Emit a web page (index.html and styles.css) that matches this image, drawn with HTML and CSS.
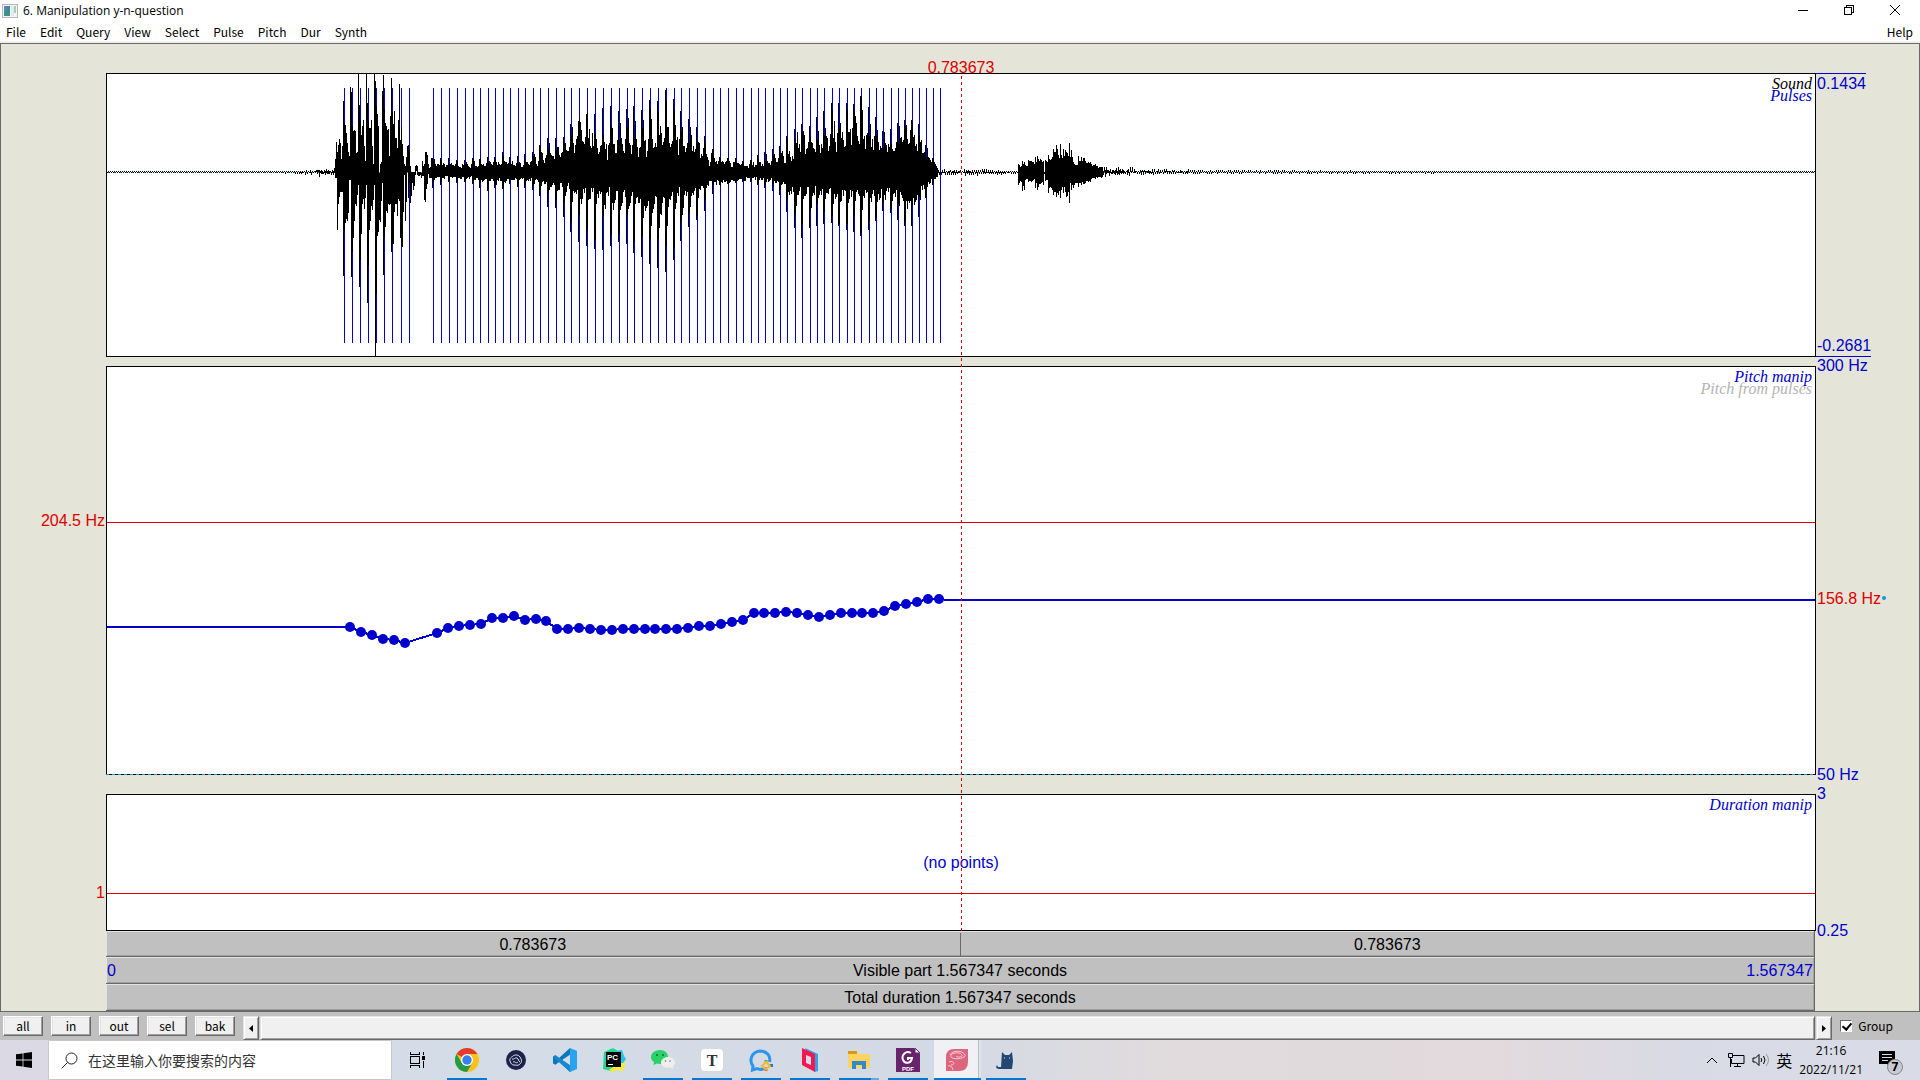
FILE: index.html
```html
<!DOCTYPE html>
<html lang="en">
<head>
<meta charset="utf-8">
<title>6. Manipulation y-n-question</title>
<link rel="stylesheet" href="styles.css">
</head>
<body>
<div class="window">
  <header class="titlebar">
    <svg class="app-icon" viewBox="0 0 16 14"><rect x=".5" y=".5" width="15" height="13" fill="#f4f4f4" stroke="#b5b8bb"/><rect x="2" y="2" width="6" height="10" fill="#3c8f8a"/><rect x="2" y="2" width="3" height="5" fill="#5b83b5"/><rect x="9" y="2" width="3" height="10" fill="#e4e9ee"/><rect x="12" y="2" width="2" height="7" fill="#a9cdbb"/></svg>
    <h1 class="title">6. Manipulation y-n-question</h1>
    <button class="win-btn" aria-label="Minimize"><svg viewBox="0 0 12 12"><path d="M1 6.5h10"/></svg></button>
    <button class="win-btn" aria-label="Restore"><svg viewBox="0 0 12 12"><path d="M1.5 3.5h7v7h-7zM3.5 3V1.5h7v7H9"/></svg></button>
    <button class="win-btn" aria-label="Close"><svg viewBox="0 0 12 12"><path class="smooth" d="M1 1l10 10M11 1L1 11"/></svg></button>
  </header>
  <nav class="menubar">
    <button>File</button><button>Edit</button><button>Query</button><button>View</button><button>Select</button><button>Pulse</button><button>Pitch</button><button>Dur</button><button>Synth</button><button class="help">Help</button>
  </nav>

  <main class="editor">
    <div class="cursor-time red">0.783673</div>

    <section class="plot sound">
      <svg class="chart" viewBox="0 0 1708 282" preserveAspectRatio="none">
        <path id="pulses" class="pulse-lines"/>
        <path class="zero-dash" d="M0 98.5H1708"/>
        <path id="wave" class="wave"/>
      </svg>
      <div class="legend"><span>Sound</span><span class="blue">Pulses</span></div>
    </section>
    <div class="axis sound-axis blue"><span class="max">0.1434</span><span class="min">-0.2681</span></div>

    <div class="left pitch-left red"><span>204.5 Hz</span></div>
    <section class="plot pitch">
      <svg class="chart" viewBox="0 0 1708 407" preserveAspectRatio="none">
        <path class="red-line" d="M0 155.5H1708"/>
        <path id="contour" class="contour"/>
        <g id="points" class="points"></g>
      </svg>
      <div class="legend"><span class="blue">Pitch manip</span><span class="faint">Pitch from pulses</span></div>
    </section>
    <div class="axis pitch-axis blue"><span class="top">300 Hz</span><span class="value red">156.8 Hz<i></i></span><span class="bottom">50 Hz</span></div>

    <div class="left duration-left red"><span>1</span></div>
    <section class="plot duration">
      <svg class="chart" viewBox="0 0 1708 135" preserveAspectRatio="none"><path class="red-line" d="M0 98.5H1708"/></svg>
      <p class="empty blue">(no points)</p>
      <div class="legend"><span class="blue">Duration manip</span></div>
    </section>
    <div class="axis duration-axis blue"><span class="top">3</span><span class="bottom">0.25</span></div>

    <div class="bar halves"><button>0.783673</button><button>0.783673</button></div>
    <button class="bar visible"><span class="blue">0</span><span>Visible part 1.567347 seconds</span><span class="blue">1.567347</span></button>
    <button class="bar total">Total duration 1.567347 seconds</button>
    <div class="cursor"></div>
  </main>

  <div class="controls">
    <button>all</button><button>in</button><button>out</button><button>sel</button><button>bak</button>
    <div class="scroll"><button class="arrow" aria-label="Scroll left"><svg viewBox="0 0 4 7"><path d="M4 0v7L0 3.5z"/></svg></button><button class="thumb" aria-label="Scroll position"></button><button class="arrow" aria-label="Scroll right"><svg viewBox="0 0 4 7"><path d="M0 0v7l4-3.5z"/></svg></button></div>
    <input type="checkbox" id="group" checked><label for="group">Group</label>
  </div>

  <footer class="taskbar">
    <button class="start" aria-label="Start"><svg viewBox="0 0 16 16"><path d="M0 2.3l6.6-.9v6.1H0zM7.4 1.3L16 0v7.5H7.4zM0 8.4h6.6v6.2L0 13.7zM7.4 8.4H16V16l-8.6-1.2z"/></svg></button>
    <label class="search"><svg viewBox="0 0 17 17"><circle cx="10.5" cy="6.5" r="5.5"/><path d="M6.6 10.4L.6 16.4"/></svg><input type="text" aria-label="Search" placeholder="在这里输入你要搜索的内容"></label>
    <nav class="tasks">
      <button aria-label="Task view"><svg class="taskview" viewBox="0 0 18 16"><path d="M1.5 0v2.500h9V0M1.500 16v-2.500h9V16M1.500 4.500h9v7h-9zM14.500 0v3M14.500 9v7"/><rect x="13" y="4" width="3" height="4"/></svg></button>
      <button class="open" aria-label="Chrome"><svg viewBox="0 0 24 24"><circle cx="12" cy="12" r="12" fill="#fbc116"/><path d="M12 12L1.600 6A12 12 0 0 1 22.400 6H12z" fill="#e33b2e"/><path d="M1.600 6A12 12 0 0 0 12 24l5.200-9L12 12l-5.200 3z" fill="#259a48"/><circle cx="12" cy="12" r="6" fill="#fff"/><circle cx="12" cy="12" r="4.700" fill="#3b7ded"/></svg></button>
      <button aria-label="Browser"><svg viewBox="0 0 24 24"><circle cx="12" cy="12" r="10" fill="#1c2348"/><path d="M6 13c-1-3 2-4 3-5s5-2 7 1 2 5 0 7-4 1-6 1-3-1-4-4zM8 11c2 1 3-2 5-1s1 3 3 4M9 14c2-1 3 2 5 0" fill="none" stroke="#d9deef"/></svg></button>
      <button aria-label="Visual Studio Code"><svg viewBox="0 0 24 24"><path d="M17 0L6 10 2.500 7.200 0 8.600v6.800l2.500 1.400L6 14l11 10 1-6-9-6 9-6z" fill="#0878bd"/><path d="M2.500 7.200L0 8.600 17.500 24l.5-6z" fill="#1689ce"/><path d="M17 0l7 3v18l-7 3z" fill="#27a4ed"/></svg></button>
      <button aria-label="PyCharm"><svg viewBox="0 0 24 24"><path d="M2 4l9-4 5 3 2 12-9 8-8-2z" fill="#22d88f"/><path d="M14 3l6-1 2 6 2 3-5 7z" fill="#1ec8e8"/><path d="M7 22l10-7 7 0-3 8-6-1-5 2z" fill="#f6ec37"/><rect x="4" y="4" width="15" height="15" fill="#000"/><text x="5" y="12" class="pc">PC</text><path d="M6 16.500h5" stroke="#fff"/></svg></button>
      <button class="open" aria-label="WeChat"><svg viewBox="0 0 24 24"><path d="M9 2c5 0 8 3 8 7s-3 7-8 7l-3-.5L2.500 17l.5-3C1 13 0 11 0 9c0-4 4-7 9-7z" fill="#29d167"/><path d="M17 9c4 0 7 2.500 7 5.500 0 2-1 3-2 4l.5 2.500-3-1.500c-6 1.500-9.500-2-9.500-5S13 9 17 9z" fill="#eeeeec"/><g fill="#176d3b"><circle cx="6" cy="7" r="1"/><circle cx="12" cy="7" r="1"/></g><circle cx="14.500" cy="13" r=".8" fill="#777"/><circle cx="19" cy="13" r=".8" fill="#777"/></svg></button>
      <button class="open" aria-label="Typora"><svg viewBox="0 0 24 24"><rect x="1" y="1" width="22" height="22" rx="4" fill="#fff"/><text x="12" y="18" text-anchor="middle" class="typora">T</text></svg></button>
      <button class="open" aria-label="WeCom"><svg viewBox="0 0 24 24"><path d="M15 20.500c-2 1-5 1-7 0L3.500 22l.5-4C0 13 2 4 11 3c7 0 11 5 9.500 11" fill="none" stroke="#2b96ea" stroke-width="3"/><path d="M17 15v-3" stroke="#32b85b" stroke-width="3"/><path d="M20 17.500h4" stroke="#1877d2" stroke-width="3"/><path d="M17 19v4" stroke="#f2622e" stroke-width="3"/><path d="M17 14l-4 4 4 3 4-3z" fill="none" stroke="#fdb52d" stroke-width="2"/></svg></button>
      <button class="open" aria-label="Parallels"><svg viewBox="0 0 24 24"><path d="M7 0l13 6v17l-3 1z" fill="#29a8e4"/><path d="M4 0l13 6v18L4 17z" fill="#f5174f"/><path d="M8 7l5 2v8l-5-2z" fill="#d9dce6"/></svg></button>
      <button class="open stacked" aria-label="Explorer"><svg viewBox="0 0 24 24"><path d="M1 4h9l2 2h11v14H1z" fill="#fdd362"/><path d="M1 3h9v3H1z" fill="#d69a12"/><path d="M5 13h14v8h-4v-4H9v4H5z" fill="#3288c9"/></svg></button>
      <button class="open" aria-label="PDF editor"><svg viewBox="0 0 24 24"><path d="M0 0h18l6 6v18H0z" fill="#67246b"/><path d="M19 0v5h5z" fill="#fff" stroke="#67246b"/><path d="M15 5C10 2 5 7 7 12c2 4 8 4 9-2h-4v2" fill="none" stroke="#fff" stroke-width="2"/><text x="12" y="23" text-anchor="middle" class="pdf">PDF</text></svg></button>
      <button class="open active" aria-label="Praat"><svg viewBox="0 0 24 24"><path d="M9 1h14v13q0 9-9 9H1V9q0-8 8-8z" fill="#dd667f"/><path d="M5 7c2-5 13-5 15 0 1 4-12 5-14 2s6-6 10-3-4 4-5 2M4 14c5-2 7 3 2 3M3 18c3-1 4 1 5 4" fill="none" stroke="#f5c9d0"/></svg></button>
      <button class="open" aria-label="Clash"><svg viewBox="0 0 24 24"><path d="M8 4l3 3h4l3-3 1 9-1 8H6c-3 0-5-1-3-4l1 2h3z" fill="#224773"/><path d="M10 10h1M15 10h1" stroke="#d8deea"/></svg></button>
    </nav>
    <div class="tray">
      <svg class="chevron" viewBox="0 0 12 7"><path d="M1 6l5-5 5 5"/></svg>
      <svg class="net" viewBox="0 0 17 14"><path d="M5 2.500h11v8H3.500V6M9.500 11v2.500M6 13.500h7M.5.500h4v4h-4zM2.500 5v9"/></svg>
      <svg class="vol" viewBox="0 0 17 14"><path d="M1 5h2.500L7 1.500v11L3.500 9H1zM9 5q1.500 2 0 4M11.500 3q3 4 0 8"/><path d="M14 1q5 6 0 12" stroke="#999"/></svg>
      <span class="ime">英</span>
      <time class="clock"><span>21:16</span><span>2022/11/21</span></time>
      <button class="notice" aria-label="Notifications"><svg viewBox="0 0 25 25"><path d="M0 1h16v13h-4v4l-4-4H0z"/><path d="M3 4.500h10M3 7.500h10M3 10.500h6" stroke="#d9dbe6"/><circle cx="16" cy="17" r="7.500" fill="#c9cbd2" stroke="#888"/><text x="16" y="21" text-anchor="middle">7</text></svg></button>
    </div>
  </footer>
</div>
<script src="plot.js"></script>
</body>
</html>
```

FILE: styles.css
```css
* { box-sizing: border-box; }
body { margin: 0; font: 12px/16px "Noto Sans CJK SC", "Open Sans", sans-serif; color: #000; }
button { margin: 0; padding: 0; border: 0; background: none; font: inherit; color: inherit; }
svg { display: block; }
.window { display: flex; flex-direction: column; height: 100vh; background: #fff; overflow: hidden; }
.blue { color: #0000cd; }
.red { color: #dc0000; }
.faint { color: #b4b4b4; }

.titlebar { display: flex; align-items: center; height: 22px; padding: 0 2px; flex: none; }
.app-icon { width: 16px; height: 14px; }
.title { margin: 0 auto 0 5px; font: 12px/16px "Open Sans", sans-serif; }
.win-btn { width: 46px; height: 20px; display: grid; place-items: center; align-self: start; }
.win-btn svg { width: 12px; height: 12px; fill: none; stroke: #000; shape-rendering: crispEdges; }
.win-btn .smooth { shape-rendering: auto; }
.menubar { display: flex; align-items: center; gap: 14px; height: 21px; padding: 0 7px 0 6px; border-bottom: 2px solid #f0f0f0; flex: none; }
.menubar .help { margin-left: auto; }

.editor {
  position: relative; flex: 1; display: grid; min-height: 0;
  grid-template-columns: 105px 1fr 103px;
  grid-template-rows: 29px 284fr 9px 409fr 19px 137fr 26px 27px 27px;
  background: #e4e5d8; border: 1px solid #696969;
  font: 16px/18px "Liberation Sans", Arial, sans-serif;
}
.cursor-time { grid-area: 1 / 2; text-align: center; padding-top: 15px; }
.plot { position: relative; border: 1px solid #000; background: #fff; grid-column: 2; min-height: 0; }
.chart { position: absolute; inset: 0; width: 100%; height: 100%; fill: none; }
.chart path { vector-effect: non-scaling-stroke; shape-rendering: crispEdges; }
.sound { grid-row: 2; }
.pitch { grid-row: 4; }
.pitch::after { content: ""; position: absolute; left: -1px; right: 0; bottom: -1px; height: 1px; background: repeating-linear-gradient(90deg, #00a0dc 0 3px, transparent 3px 6px); }
.duration { grid-row: 6; display: grid; place-items: center; }
.pulse-lines { stroke: #0000cd; }
.wave { stroke: #000; }
.zero-dash { stroke: #00a0dc; stroke-dasharray: 3 3; }
.red-line { stroke: #dc0000; }
.contour { stroke: #0000cd; stroke-width: 2; }
.points { fill: #0000cd; }
.legend { position: absolute; top: 4px; right: 3px; display: flex; flex-direction: column; align-items: flex-end; font: italic 16px/12px "Liberation Serif", "Times New Roman", serif; }
.empty { position: relative; margin: 0; }

.left { grid-column: 1; position: relative; }
.pitch-left { grid-row: 4; }
.duration-left { grid-row: 6; }
.left span { position: absolute; right: 1px; top: 38%; transform: translateY(-50%); white-space: nowrap; }
.duration-left span { top: 72%; }
.axis { grid-column: 3; position: relative; white-space: nowrap; }
.axis span { position: absolute; left: 1px; transform: translateY(-50%); }
.sound-axis { grid-row: 2; display: flex; flex-direction: column; justify-content: space-between; align-items: flex-start; }
.sound-axis .max, .sound-axis .min { position: static; transform: none; padding: 1px 0 0 1px; border-top: 1px solid #0000cd; }
.sound-axis .min { padding: 0 0 1px 1px; border-top: 0; border-bottom: 1px solid #0000cd; }
.pitch-axis { grid-row: 4; }
.duration-axis { grid-row: 6; }
.top { top: 0; }
.bottom { top: 100%; }
.value { top: 57%; }
.value i { display: inline-block; width: 4px; height: 4px; margin: 0 0 4px 1px; border-radius: 2px; background: #00a0dc; }
.cursor { position: absolute; top: 32px; bottom: 80px; left: 105px; right: 103px; pointer-events: none; }
.cursor::after { content: ""; position: absolute; left: 50%; top: 0; bottom: 0; width: 1px; background: repeating-linear-gradient(#dc0000 0 3px, transparent 3px 6px); }

.bar { grid-column: 2; background: #c0c0c0; border: 1px solid #696969; border-width: 0 1px 1px 0; margin: 0 1px 0 0; padding-top: 2px; box-shadow: inset 1px 1px #e3e3e3, inset -1px -1px #a0a0a0; }
.halves { grid-row: 7; display: flex; }
.halves button { flex: 1; }
.halves button + button { border-left: 1px solid #696969; }
.visible { grid-row: 8; display: grid; grid-template-columns: 1fr auto 1fr; align-items: center; padding: 2px 1px 0; }
.visible span:first-child { text-align: left; }
.visible span:last-child { text-align: right; }
.total { grid-row: 9; }

.controls { display: flex; align-items: center; gap: 8px; height: 28px; padding: 0 27px 0 3px; background: #c0c0c0; flex: none; }
.controls > button { width: 40px; height: 20px; background: #f0f0f0; border: 1px solid; border-color: #fff #696969 #696969 #fff; box-shadow: inset -1px -1px #a0a0a0, inset 1px 1px #e3e3e3; }
.scroll { display: flex; flex: 1; gap: 1px; height: 24px; align-self: end; }
.scroll button { background: #f0f0f0; border: 1px solid; border-color: #e3e3e3 #696969 #696969 #e3e3e3; box-shadow: inset 1px 1px #fff, inset -1px -1px #a0a0a0; }
.arrow { width: 16px; display: grid; place-items: center; }
.arrow svg { width: 4px; height: 7px; }
.thumb { flex: 1; }
.controls input { appearance: none; width: 12px; height: 12px; margin: 0; background: #fff; border: 1px solid; border-color: #696969 #fff #fff #696969; position: relative; }
.controls input:checked::after { content: ""; position: absolute; left: 3px; top: 0; width: 4px; height: 7px; border: solid #000; border-width: 0 2px 2px 0; transform: rotate(40deg); }
.controls label { margin-left: -2px; }

.taskbar { display: flex; height: 40px; flex: none; background: linear-gradient(90deg, #dbd9e3, #d3dce7 22%, #d4dae5 50%, #e0dbdd 60%, #e2dadd 78%, #d8dae5 88%, #d9dbe6); }
.start { width: 48px; display: grid; place-items: center; }
.start svg { width: 16px; height: 16px; }
.search { display: flex; align-items: center; gap: 10px; width: 344px; padding-left: 12px; background: #fff; border: 1px solid #c8c8cc; }
.search svg { width: 17px; height: 17px; fill: none; stroke: #222; }
.search input { flex: 1; min-width: 0; border: 0; padding: 0; outline: 0; background: none; font: 14px/20px "Noto Sans CJK SC", sans-serif; }
.search input::placeholder { color: #333; opacity: 1; }
.tasks { display: flex; gap: 1px; margin-left: 2px; }
.tasks button { position: relative; width: 48px; display: grid; place-items: center; }
.tasks svg { width: 24px; height: 24px; }
.tasks .taskview { width: 18px; height: 16px; fill: none; stroke: #000; shape-rendering: crispEdges; }
.taskview rect { fill: #000; stroke: none; }
.tasks .open::after { content: ""; position: absolute; left: 4px; right: 4px; bottom: 0; height: 2px; background: #0078d7; }
.tasks .stacked::after { border-right: 8px solid #62a8e5; }
.tasks .active { background: linear-gradient(90deg, transparent 1px, #f0f1f5 1px 45px, #b9bdc7 45px 46px, #e1e4ec 46px); }
.tasks .active::after { left: 1px; right: 0; }
.pc { font: bold 8px "Liberation Sans", sans-serif; fill: #fff; }
.typora { font: bold 16px "Liberation Serif", serif; fill: #333; }
.pdf { font: bold 6px "Liberation Sans", sans-serif; fill: #fff; }
.tray { display: flex; align-items: center; margin-left: auto; gap: 7px; padding-right: 16px; }
.tray svg { fill: none; stroke: #000; }
.chevron { width: 12px; height: 7px; margin-right: 3px; }
.net, .vol { width: 17px; height: 14px; }
.ime { font-size: 16px; line-height: 20px; }
.clock { display: flex; flex-direction: column; align-items: center; font: 12px/19px "Open Sans", sans-serif; }
.notice { margin-left: 9px; }
.tray .notice svg { width: 25px; height: 25px; fill: #000; stroke: none; margin-top: 4px; }
.notice text { font: bold 12px "Open Sans", sans-serif; }
```

FILE: plot.js
```js
// Draws the waveform, the glottal pulses and the pitch contour.
const MID = 98.5;

// Small repeatable noise source, so every load draws the same curve.
let seed = 7;
const noise = () => (seed = (seed * 1103515245 + 12345) % 2147483648) / 2147483648;

// Column: x, height above the zero line, depth below it.
const columns = [];
const add = (x, up, down) => columns.push([x, up, down]);

// Interpolated noisy stretch through [x, up, down] keys.
// Neighbouring columns swing to opposite sides of the zero line.
function stretch(keys) {
  for (let i = 0; i < keys.length - 1; i++) {
    const [x0, u0, d0] = keys[i], [x1, u1, d1] = keys[i + 1];
    for (let x = x0; x < x1; x++) {
      const t = (x - x0) / (x1 - x0), a = 0.9 * noise(), b = 0.9 * noise();
      const u = (u0 + (u1 - u0) * t) * a, d = (d0 + (d1 - d0) * t) * b;
      if (x % 2) add(x, u + 0.6, Math.min(d, d / 2) - 1);
      else add(x, u / 2 - 0.4, d);
    }
  }
}

stretch([[0, 0, 0], [150, 0, 0], [190, 1, 1], [200, 2, 3], [207, 3, 4], [213, 7, 6], [216, 2, 3], [221, 5, 4], [224, 2, 3], [228, 5, 4]]);

// First vowel, one entry per column.
const onset = [
  [13, 5], [30, 5], [20, 57], [27, 31], [33, 24], [29, 19], [13, 19], [26, 19], [71, 103], [49, 58], [47, 50], [39, 46],
  [29, 48], [20, 40], [16, 7], [85, 7], [80, 104], [46, 79], [41, 65], [42, 48], [41, 31], [19, 33], [20, 22], [98, 12],
  [67, 114], [51, 87], [37, 61], [46, 31], [52, 26], [26, 36], [11, 25], [98, 12], [69, 130], [51, 93], [44, 57], [44, 48],
  [52, 33], [26, 37], [8, 27], [98, 12], [91, 184], [66, 121], [58, 63], [46, 59], [-1, 47], [8, 49], [10, 28], [81, 10],
  [97, 102], [63, 64], [49, 54], [46, 38], [42, 40], [43, 31], [16, 32], [56, 31], [94, 79], [60, 71], [48, 71], [61, 39],
  [34, 31], [34, 31], [24, 43], [52, 26], [88, 28], [32, 65], [45, 73], [28, 74], [16, 39], [8, 2], [6, 48], [15, 29],
  [26, -1], [27, 25], [23, 10], [6, 30], [0, 23], [0, 10], [0, 17], [0, 13], [6, 2], [7, -2], [6, 2], [0, 3], [0, 3],
  [0, 2], [-1, 5], [11, 3], [6, 3], [8, 27], [20, 29], [20, 16], [17, 11], [8, 1], [4, 5], [5, 5], [14, 5]
];
onset.forEach(([u, d], i) => add(228 + i, u, d));

// Voiced part: pulse x, peak up, peak down, body up, body down.
const voiced = [
  [326, 14, 15, 6, 4], [334, 14, 12, 6, 4], [342, 14, 9, 5, 4], [350, 12, 10, 5, 5], [358, 12, 9, 5, 5], [366, 14, 11, 5, 6],
  [373, 13, 15, 7, 7], [381, 15, 18, 8, 7], [388, 15, 15, 7, 8], [396, 20, 16, 6, 7], [403, 15, 11, 6, 6], [411, 16, 14, 5, 6],
  [418, 18, 15, 7, 7], [426, 20, 17, 8, 8], [433, 27, 23, 12, 10], [441, 34, 34, 14, 14], [449, 34, 35, 15, 13],
  [457, 35, 44, 17, 14], [464, 48, 59, 22, 18], [472, 51, 69, 26, 18], [480, 58, 73, 28, 18], [488, 58, 76, 16, 18],
  [496, 64, 77, 13, 20], [504, 66, 73, 14, 22], [512, 61, 69, 17, 22], [520, 63, 71, 20, 24], [527, 66, 80, 20, 26],
  [535, 62, 84, 20, 28], [543, 72, 91, 22, 28], [551, 71, 95, 21, 30], [559, 82, 99, 20, 20], [567, 73, 87, 18, 18],
  [574, 61, 68, 20, 20], [582, 53, 54, 22, 18], [590, 45, 47, 13, 15], [598, 36, 38, 8, 11], [606, 23, 21, 7, 9],
  [613, 15, 12, 7, 9], [621, 14, 11, 6, 8], [629, 14, 10, 6, 7], [636, 11, 9, 5, 6], [644, 12, 9, 6, 6], [651, 17, 12, 6, 6],
  [658, 20, 15, 7, 7], [666, 23, 18, 8, 9], [673, 26, 22, 10, 12], [680, 36, 39, 13, 18], [688, 43, 55, 24, 18],
  [695, 48, 65, 22, 18], [703, 46, 55, 20, 18], [710, 55, 53, 23, 20], [717, 61, 51, 24, 18], [725, 69, 50, 26, 20],
  [732, 69, 53, 26, 20], [740, 69, 57, 26, 22], [747, 68, 59, 26, 20], [754, 76, 63, 22, 20], [762, 65, 57, 20, 20],
  [769, 55, 48, 20, 20], [776, 41, 38, 22, 20], [784, 43, 40, 22, 20], [791, 49, 47, 24, 24], [798, 52, 53, 30, 30],
  [805, 52, 53, 26, 26], [812, 48, 44, 16, 14], [819, 27, 25, 10, 9], [826, 14, 12, 3, 3]
];
// Share of the peak still left at each column after the pulse.
const decayUp = [1, 0.72, 0.6, 0.42, 0.2, 0.05, 0.22, 0.3];
const decayDown = [1, 0.75, 0.35, 0.22, 0.12, 0.05, 0.02, 0];
voiced.forEach(([x, pu, pd, bu, bd], i) => {
  const end = i < voiced.length - 1 ? voiced[i + 1][0] : x + 6;
  for (let k = 0; k < end - x; k++) {
    const n = k ? 0.65 + 0.6 * noise() : 1;
    const m = k ? 0.65 + 0.5 * noise() : 1;
    add(x - 1 + k, (bu + (pu - bu) * decayUp[k]) * n, (bd + (pd - bd) * decayDown[k]) * m);
  }
});

// Release burst and fading tail.
stretch([[831, 2, 3], [870, 4, 3], [900, 1, 2], [911, 1, 1]]);
const burst = [[911, 8, 12], [915, 11, 18], [918, 7, 7], [921, 12, 9], [928, 15, 15], [930, 16, 17], [933, 13, 11], [936, 11, 12],
  [937, 0, 1], [938, 12, 8], [941, 17, 20], [946, 23, 22], [949, 27, 24], [951, 17, 22], [953, 28, 25], [954, 17, 17], [956, 23, 20],
  [959, 20, 24], [962, 29, 30], [963, 15, 10], [964, 22, 17], [966, 10, 15], [971, 16, 14], [974, 15, 12], [978, 11, 10],
  [984, 8, 6], [990, 6, 5], [996, 6, 6]];
for (let i = 0; i < burst.length - 1; i++) {
  const [x0, u0, d0] = burst[i], x1 = burst[i + 1][0];
  for (let x = x0; x < x1; x++) { const n = x === x0 ? 1 : 0.65 + 0.3 * noise(); add(x, u0 * n, d0 * n); }
}
stretch([[996, 7, 6], [1010, 6, 4], [1025, 5, 3], [1050, 3, 2], [1100, 2, 1], [1250, 1, 1], [1480, 0, 0], [1708, 0, 0]]);

document.getElementById("wave").setAttribute("d", columns.map(([x, u, d]) => {
  const top = Math.max(0, Math.round(MID - 0.5 - u)), bottom = Math.max(top + 1, Math.min(282, Math.round(MID + 0.5 + d)));
  return `M${x + 0.5} ${top}V${bottom}`;
}).join(""));

const early = [237, 245, 253, 261, 269, 277, 285, 294, 302];
document.getElementById("pulses").setAttribute("d",
  [...early, ...voiced.map(v => v[0]), 833].map(x => `M${x + 0.5} 14V269`).join(""));

// Pitch targets.
const pitch = [[242, 260], [253, 265], [264, 268], [275, 272], [286, 273], [297, 276], [329, 266], [340, 261], [351, 259],
  [362, 258], [373, 257], [384, 251], [395, 251], [406, 249], [417, 253], [428, 252], [438, 254], [449, 262], [460, 262], [471, 261],
  [482, 262], [493, 263], [504, 263], [515, 262], [526, 262], [537, 262], [547, 262], [558, 262], [569, 262], [580, 261], [591, 259],
  [602, 259], [613, 257], [624, 255], [635, 253], [646, 246], [656, 246], [667, 246], [678, 245], [689, 246], [700, 248], [711, 250],
  [722, 248], [733, 246], [744, 246], [754, 246], [765, 246], [776, 244], [787, 239], [798, 237], [809, 235], [820, 232], [831, 232]];
document.getElementById("contour").setAttribute("d", "M0 260H243L" + pitch.map(([x, y]) => `${x + 1} ${y}`).join("L") + "L842 233H1708");
document.getElementById("points").innerHTML = pitch.map(([x, y]) => `<circle cx="${x + 1}" cy="${y}" r="5"/>`).join("");
```
